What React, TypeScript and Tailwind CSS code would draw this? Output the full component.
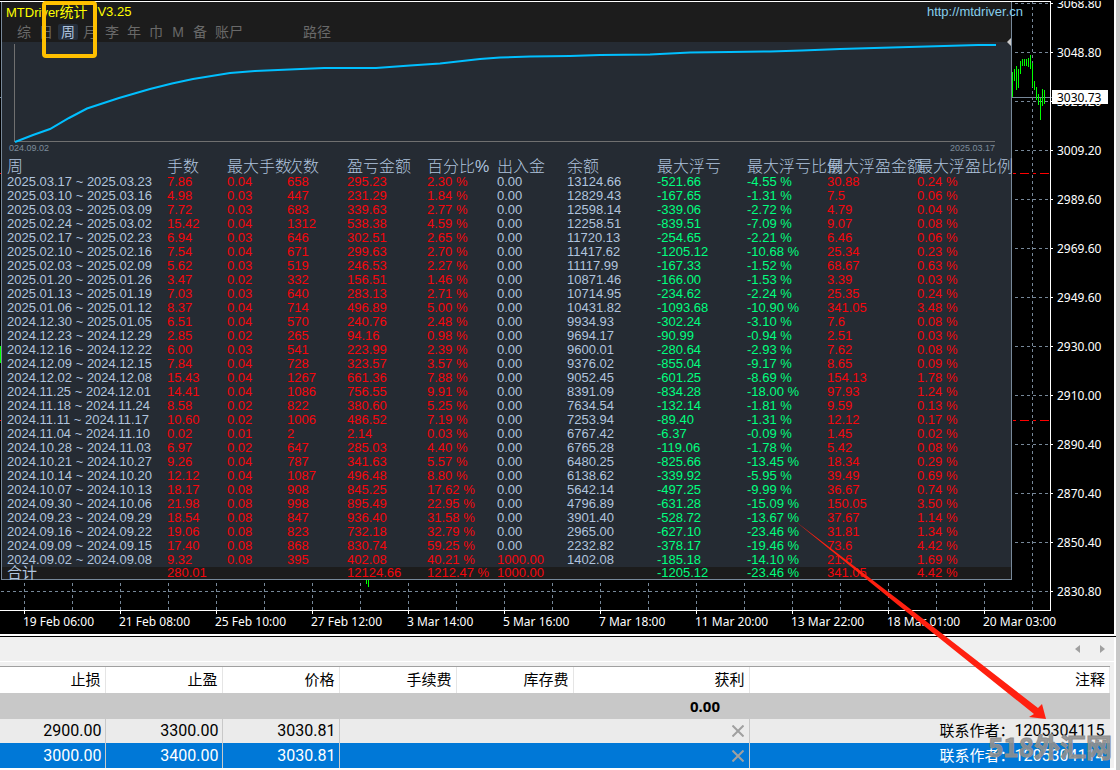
import React from 'react';

const prices = [
  '3068.80', '3048.80', '3029.20', '3009.20', '2989.60', '2969.60', '2949.60',
  '2930.00', '2910.00', '2890.40', '2870.40', '2850.40', '2830.80',
];

const times = [
  '19 Feb 06:00', '21 Feb 08:00', '25 Feb 10:00', '27 Feb 12:00', '3 Mar 14:00', '5 Mar 16:00',
  '7 Mar 18:00', '11 Mar 20:00', '13 Mar 22:00', '18 Mar 01:00', '20 Mar 03:00',
];

// [x, high, low]
const candles = [
  [1012, 72, 97], [1014, 69, 81], [1016, 66, 90], [1018, 69, 88], [1020, 61, 74], [1022, 59, 66],
  [1024, 59, 66], [1026, 59, 66], [1028, 58, 67], [1030, 55, 69], [1032, 63, 87], [1034, 81, 90],
  [1036, 87, 100], [1038, 94, 105], [1040, 98, 120], [1042, 89, 106], [1044, 90, 104],
  [366, 579, 584], [368, 579, 587], [0, 346, 363],
];

const tabs = ['综', '日', '周', '月', '李', '年', '巾', 'M', '备'];

const headers = [
  '周', '手数', '最大手数', '次数', '盈亏金额', '百分比%', '出入金', '余额',
  '最大浮亏', '最大浮亏比例', '最大浮盈金额', '最大浮盈比例',
];

// 周 | 手数 | 最大手数 | 次数 | 盈亏 | 百分比 | 出入金 | 余额 | 浮亏 | 浮亏比例 | 浮盈 | 浮盈比例
const weeks = `
2025.03.17 ~ 2025.03.23|7.86|0.04|658|295.23|2.30 %|0.00|13124.66|-521.66|-4.55 %|30.88|0.24 %
2025.03.10 ~ 2025.03.16|4.98|0.03|447|231.29|1.84 %|0.00|12829.43|-167.65|-1.31 %|7.5|0.06 %
2025.03.03 ~ 2025.03.09|7.72|0.03|683|339.63|2.77 %|0.00|12598.14|-339.06|-2.72 %|4.79|0.04 %
2025.02.24 ~ 2025.03.02|15.42|0.04|1312|538.38|4.59 %|0.00|12258.51|-839.51|-7.09 %|9.07|0.08 %
2025.02.17 ~ 2025.02.23|6.94|0.03|646|302.51|2.65 %|0.00|11720.13|-254.65|-2.21 %|6.46|0.06 %
2025.02.10 ~ 2025.02.16|7.54|0.04|671|299.63|2.70 %|0.00|11417.62|-1205.12|-10.68 %|25.34|0.23 %
2025.02.03 ~ 2025.02.09|5.62|0.03|519|246.53|2.27 %|0.00|11117.99|-167.33|-1.52 %|68.67|0.63 %
2025.01.20 ~ 2025.01.26|3.47|0.02|332|156.51|1.46 %|0.00|10871.46|-166.00|-1.53 %|3.39|0.03 %
2025.01.13 ~ 2025.01.19|7.03|0.03|640|283.13|2.71 %|0.00|10714.95|-234.62|-2.24 %|25.35|0.24 %
2025.01.06 ~ 2025.01.12|8.37|0.04|714|496.89|5.00 %|0.00|10431.82|-1093.68|-10.90 %|341.05|3.48 %
2024.12.30 ~ 2025.01.05|6.51|0.04|570|240.76|2.48 %|0.00|9934.93|-302.24|-3.10 %|7.6|0.08 %
2024.12.23 ~ 2024.12.29|2.85|0.02|265|94.16|0.98 %|0.00|9694.17|-90.99|-0.94 %|2.51|0.03 %
2024.12.16 ~ 2024.12.22|6.00|0.03|541|223.99|2.39 %|0.00|9600.01|-280.64|-2.93 %|7.62|0.08 %
2024.12.09 ~ 2024.12.15|7.84|0.04|728|323.57|3.57 %|0.00|9376.02|-855.04|-9.17 %|8.65|0.09 %
2024.12.02 ~ 2024.12.08|15.43|0.04|1267|661.36|7.88 %|0.00|9052.45|-601.25|-8.69 %|154.13|1.78 %
2024.11.25 ~ 2024.12.01|14.41|0.04|1086|756.55|9.91 %|0.00|8391.09|-834.28|-18.00 %|97.93|1.24 %
2024.11.18 ~ 2024.11.24|8.58|0.02|822|380.60|5.25 %|0.00|7634.54|-132.14|-1.81 %|9.59|0.13 %
2024.11.11 ~ 2024.11.17|10.60|0.02|1006|486.52|7.19 %|0.00|7253.94|-89.40|-1.31 %|12.12|0.17 %
2024.11.04 ~ 2024.11.10|0.02|0.01|2|2.14|0.03 %|0.00|6767.42|-6.37|-0.09 %|1.45|0.02 %
2024.10.28 ~ 2024.11.03|6.97|0.02|647|285.03|4.40 %|0.00|6765.28|-119.06|-1.78 %|5.42|0.08 %
2024.10.21 ~ 2024.10.27|9.26|0.04|787|341.63|5.57 %|0.00|6480.25|-825.66|-13.45 %|18.34|0.29 %
2024.10.14 ~ 2024.10.20|12.12|0.04|1087|496.48|8.80 %|0.00|6138.62|-339.92|-5.95 %|39.49|0.69 %
2024.10.07 ~ 2024.10.13|18.17|0.08|908|845.25|17.62 %|0.00|5642.14|-497.25|-9.99 %|36.67|0.74 %
2024.09.30 ~ 2024.10.06|21.98|0.08|998|895.49|22.95 %|0.00|4796.89|-631.28|-15.09 %|150.05|3.50 %
2024.09.23 ~ 2024.09.29|18.54|0.08|847|936.40|31.58 %|0.00|3901.40|-528.72|-13.67 %|37.67|1.14 %
2024.09.16 ~ 2024.09.22|19.06|0.08|823|732.18|32.79 %|0.00|2965.00|-627.10|-23.46 %|31.81|1.34 %
2024.09.09 ~ 2024.09.15|17.40|0.08|868|830.74|59.25 %|0.00|2232.82|-378.17|-19.46 %|73.6|4.42 %
2024.09.02 ~ 2024.09.08|9.32|0.08|395|402.08|40.21 %|1000.00|1402.08|-185.18|-14.10 %|21.6|1.69 %
`.trim().split('\n').map((line) => line.split('|'));

const totals = ['合计', '280.01', '', '', '12124.66', '1212.47 %', '1000.00', '', '-1205.12', '-23.46 %', '341.05', '4.42 %'];

const cellColor = (col: number, value: string) => {
  if (col === 0 || col === 7 || value === '0.00') return 'text-[#b0c4de]';
  if (col === 8 || col === 9) return 'text-[#00ff7f]';
  return 'text-[#f5060c]';
};

const ChartBackdrop: React.FC = () => (
  <svg className="absolute left-0 top-0" width="1114" height="634" shapeRendering="crispEdges" fill="none">
    <g stroke="#778899" strokeDasharray="3 3">
      {Array.from({ length: 22 }, (_, i) => (
        <path key={i} d={`M${24 + i * 48}.5 1V610`} />
      ))}
      {prices.map((p, i) => (
        <path key={p} d={`M1 ${3 + i * 49}.5H1050`} />
      ))}
    </g>
    <g stroke="#ffffff">
      {prices.map((p, i) => (
        <path key={p} d={`M1051 ${3 + i * 49}.5h2`} />
      ))}
      {times.map((t, i) => (
        <path key={t} d={`M${24 + i * 96}.5 611v3`} />
      ))}
    </g>
    <path d="M0 97.5H1052" stroke="#778899" />
    <path d="M0 173.5H1050M0 420.5H1050" stroke="#ff0000" strokeDasharray="9 4 3 4" />
    <g stroke="#00ff00">
      {candles.map(([x, high, low]) => (
        <path key={x} d={`M${x}.5 ${high}V${low}`} />
      ))}
    </g>
  </svg>
);

const EquityCurve: React.FC = () => (
  <svg className="block w-full h-[100px] overflow-visible" viewBox="0 0 1009 100" preserveAspectRatio="none" fill="none">
    <path d="M12.5 2V99.500H993" stroke="#707070" shapeRendering="crispEdges" />
    <path
      d="M13 100L31 93L48 87L67 76L85 66.500L117 56L148 47L170 41.500L191 37L228 31L253 29L276 28L322 26H374L408 23.500L438 21.500L478 17L498 15.500L528 14.500L568 14L598 13L648 12.500L688 10.500L728 10L768 9.500L800 8.500L838 7L872 6L907 5L942 4L976 3H994"
      stroke="#00bfff"
      strokeWidth="2"
    />
    <path d="M1009 -4l-4 4l4 4z" fill="#c8c8c8" />
  </svg>
);

const StatsPanel: React.FC = () => (
  <div className="relative ml-px mr-[38px] border-x border-b border-[#778899] bg-[#252b33] text-[13px] font-['Liberation_Sans','Noto_Sans_CJK_SC',sans-serif]">
    <div className="bg-[#1c1c1c]">
      <div className="flex h-5 items-center justify-between pl-1 leading-5">
        <h1 className="flex gap-[10px] text-[#ffff00]">
          <span>MTDriver<span className="text-[14px]">统计</span></span>
          <span>V3.25</span>
        </h1>
        <a href="http://mtdriver.cn" className="-mr-3 text-[#87ceeb]">http://mtdriver.cn</a>
      </div>
      <nav className="flex h-5 items-center pl-[11px] text-[14px] text-[#696969]">
        {tabs.map((tab) => (
          <button
            key={tab}
            className={`mx-px h-4 w-5 rounded-[2px] leading-4 ${tab === '周' ? 'bg-[#252f3c] text-[#b0c4de]' : ''}`}
          >
            {tab}
          </button>
        ))}
        <button className="ml-1 leading-4">账尸</button>
        <button className="ml-[60px] leading-4">路径</button>
      </nav>
    </div>
    <EquityCurve />
    <div className="flex h-[14px] justify-between pl-[7px] pr-4 text-[9px] leading-[12px] text-[#7d8b9b]">
      <span>024.09.02</span>
      <span>2025.03.17</span>
    </div>
    <table className="w-full table-fixed whitespace-nowrap text-left leading-[14px]">
      <colgroup>
        <col className="w-[165px]" />
        <col className="w-[60px]" />
        <col className="w-[60px]" />
        <col className="w-[60px]" />
        <col className="w-20" />
        <col className="w-[70px]" />
        <col className="w-[70px]" />
        <col className="w-[90px]" />
        <col className="w-[90px]" />
        <col className="w-20" />
        <col className="w-[90px]" />
        <col />
      </colgroup>
      <thead>
        <tr>
          {headers.map((h) => (
            <th key={h} className="h-[19px] p-0 pt-[2px] text-[16px] leading-[17px] font-light text-[#b0c4de] first:pl-[5px]">{h}</th>
          ))}
        </tr>
      </thead>
      <tbody>
        {weeks.map((row) => (
          <tr key={row[0]}>
            {row.map((value, col) => (
              <td key={col} className={`h-[14px] p-0 first:pl-[5px] ${cellColor(col, value)}`}>{value}</td>
            ))}
          </tr>
        ))}
      </tbody>
      <tfoot>
        <tr className="bg-[#1c1c1c] leading-[12px]">
          {totals.map((value, col) => (
            <td key={col} className={`h-3 p-0 first:pl-[5px] first:text-[15px] ${cellColor(col, value)}`}>{value}</td>
          ))}
        </tr>
      </tfoot>
    </table>
  </div>
);

const PriceChart: React.FC = () => (
  <section className="relative bg-black pt-px text-[12px] text-white font-['Noto_Sans',sans-serif]">
    <ChartBackdrop />
    <div className="relative flex">
      <div className="flex-1 border-y border-r border-white pb-[30px]">
        <StatsPanel />
      </div>
      <div className="relative h-[610px] w-[63px] shrink-0 overflow-hidden pl-[6px]">
        <div className="-mt-[22px]">
          {prices.map((p) => (
            <div key={p} className="h-[49px] leading-[49px]">{p}</div>
          ))}
        </div>
        <div className="absolute left-px top-[89px] h-[14px] w-14 bg-white pl-[5px] leading-[15px] text-black">3030.73</div>
      </div>
    </div>
    <div className="relative flex h-[23px] overflow-hidden pl-[23px] leading-[21px]">
      {times.map((t) => (
        <span key={t} className="w-24 shrink-0 whitespace-nowrap">{t}</span>
      ))}
    </div>
  </section>
);

const CloseButton: React.FC = () => (
  <button className="block ml-auto mr-[5px]" aria-label="平仓">
    <svg width="12" height="12" viewBox="0 0 12 12" fill="none" stroke="#a0a0a0" strokeWidth="2">
      <path d="M0.500 0.500L11.500 11.500M11.500 0.500L0.500 11.500" />
    </svg>
  </button>
);

const orders = [
  { sl: '2900.00', tp: '3300.00', price: '3030.81', author: '1205304115', selected: false },
  { sl: '3000.00', tp: '3400.00', price: '3030.81', author: '1205304114', selected: true },
];

const Terminal: React.FC = () => (
  <section className="bg-[#f0f0f0] font-['Roboto','Noto_Sans_CJK_SC',sans-serif]">
    <div className="flex h-[25px] items-center justify-end gap-5 border-b border-white pr-[9px]">
      <button aria-label="向左滚动">
        <svg className="block" width="5" height="8" fill="#a0a0a0"><path d="M5 0v8L0 4z" /></svg>
      </button>
      <button aria-label="向右滚动">
        <svg className="block" width="5" height="8" fill="#a0a0a0"><path d="M0 0v8L5 4z" /></svg>
      </button>
    </div>
    <div className="mr-1 mt-1 border-t border-[#a0a0a0]">
      <table className="w-full table-fixed whitespace-nowrap text-right text-[16px] text-black">
        <colgroup>
          <col className="w-[105px]" />
          <col className="w-[117px]" />
          <col className="w-[117px]" />
          <col className="w-[117px]" />
          <col className="w-[117px]" />
          <col className="w-44" />
          <col />
        </colgroup>
        <thead>
          <tr className="bg-white text-[15px]">
            {['止损', '止盈', '价格', '手续费', '库存费', '获利', '注释'].map((h) => (
              <th key={h} className="h-[26px] border-r border-[#e5e5e5] p-0 pr-1 leading-[26px] font-normal">{h}</th>
            ))}
          </tr>
        </thead>
        <tbody>
          <tr className="bg-[#c8c8c8]">
            <td colSpan={6} className="h-[26px] p-0 pr-[29px] text-[15px] leading-[24px] font-bold font-['Noto_Sans',sans-serif]">0.00</td>
            <td />
          </tr>
          {orders.map((o) => (
            <tr key={o.sl} className={o.selected ? 'h-[25px] bg-[#0078d7] text-white' : 'h-6 bg-[#ebebeb]'}>
              {[o.sl, o.tp, o.price].map((v, i) => (
                <td key={i} className="border-r border-[#c8c8c8] p-0 pr-[3px] leading-6">{v}</td>
              ))}
              <td colSpan={3} className="border-r border-[#c8c8c8] p-0"><CloseButton /></td>
              <td className="p-0 pr-[5px] leading-6">
                <span className="text-[15px] leading-5">联系作者：</span>{o.author}
              </td>
            </tr>
          ))}
        </tbody>
      </table>
    </div>
  </section>
);

export default function App() {
  return (
    <main className="relative min-h-screen overflow-hidden border-r-4 border-[#c8c8c8] bg-white">
      <div className="pr-[2px]">
        <PriceChart />
      </div>
      <div className="mt-[2px] border-t border-black pr-[2px]">
        <Terminal />
      </div>

      {/* 标注：当前选中的“周”标签 */}
      <div className="absolute left-[42px] top-px h-[57px] w-[55px] rounded-[4px] border-4 border-[#ffc000]"></div>

      <div className="absolute bottom-[7px] right-1 text-[26px] leading-[34px] font-bold text-[#8f8f8f]/90 font-['Noto_Sans_CJK_SC',sans-serif] [-webkit-text-stroke:1px_#8f8f8f]">
        518外汇网
      </div>

      {/* 指向联系方式的箭头 */}
      <svg className="pointer-events-none absolute left-0 top-0" width="1116" height="770" fill="#ff2010">
        <path d="M795 521L900 601L1038 708L1042 704L1046 719L1029 717L1034 714L898 605Z" />
      </svg>
    </main>
  );
}
